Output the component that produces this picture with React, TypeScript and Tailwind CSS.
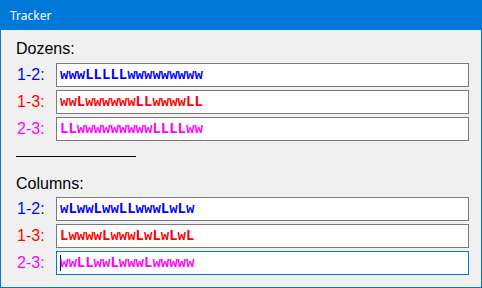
import React from "react";

const groups = [
  {
    title: "Dozens:",
    rows: [
      { label: "1-2:", color: "text-[#0000ff]", value: "wwwLLLLLwwwwwwwww" },
      { label: "1-3:", color: "text-[#ff0000]", value: "wwLwwwwwwLLwwwwLL" },
      { label: "2-3:", color: "text-[#ff00ff]", value: "LLwwwwwwwwwLLLLww" },
    ],
  },
  {
    title: "Columns:",
    rows: [
      { label: "1-2:", color: "text-[#0000ff]", value: "wLwwLwwLLwwwLwLw" },
      { label: "1-3:", color: "text-[#ff0000]", value: "LwwwwLwwwLwLwLwL" },
      { label: "2-3:", color: "text-[#ff00ff]", value: "wwLLwwLwwwLwwwww", focused: true },
    ],
  },
];

type Row = { label: string; color: string; value: string; focused?: boolean };

const FieldRow = ({ row }: { row: Row }) => (
  <div className="flex items-center h-[24px]">
    <div
      className={`w-[40px] pl-px text-[16px] leading-[20px] ${row.color}`}
      style={{ fontFamily: '"Liberation Sans", Arial, sans-serif' }}
    >
      {row.label}
    </div>
    <div
      className={`w-[413px] h-[24px] bg-white border flex items-center pl-[3px] ${
        row.focused ? "border-[#0078d7]" : "border-[#7a7a7a]"
      }`}
    >
      {row.focused && <span className="inline-block w-px h-[16px] bg-black -mr-px" />}
      <span
        className={`text-[14px] font-bold leading-[18px] ${row.color}`}
        style={{ fontFamily: '"Liberation Mono", "Courier New", monospace' }}
      >
        {row.value}
      </span>
    </div>
  </div>
);

const App = () => {
  return (
    <div className="w-[482px] h-[288px] border border-[#0078d7] bg-[#f0f0f0] flex flex-col overflow-hidden">
      <div
        className="h-[29px] bg-[#0078d7] text-white text-[12px] flex items-center pl-[9px] shrink-0"
        style={{ fontFamily: '"Noto Sans", "Open Sans", sans-serif' }}
      >
        Tracker
      </div>
      <div className="pl-[15px] flex flex-col">
        <div
          className="mt-[9px] text-[16px] leading-[20px] text-black"
          style={{ fontFamily: '"Liberation Sans", Arial, sans-serif' }}
        >
          {groups[0].title}
        </div>
        <div className="mt-[4px] flex flex-col gap-[3px]">
          {groups[0].rows.map((r) => (
            <FieldRow key={r.label} row={r} />
          ))}
        </div>
        <div className="mt-[15px] h-px w-[120px] bg-black" />
        <div
          className="mt-[17px] text-[16px] leading-[20px] text-black"
          style={{ fontFamily: '"Liberation Sans", Arial, sans-serif' }}
        >
          {groups[1].title}
        </div>
        <div className="mt-[3px] flex flex-col gap-[3px]">
          {groups[1].rows.map((r) => (
            <FieldRow key={r.label} row={r} />
          ))}
        </div>
      </div>
    </div>
  );
};

export default App;
